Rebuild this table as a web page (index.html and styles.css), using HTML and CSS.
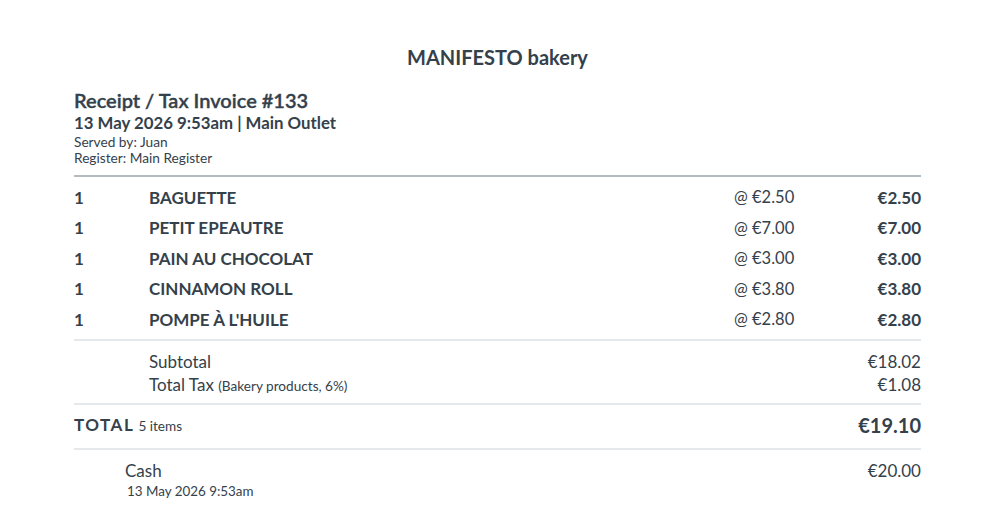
FILE: index.html
```html
<!DOCTYPE html>
<html lang="en">
<head>
    <meta charset="UTF-8">
    <title>Receipt #133</title>
    <link rel="stylesheet" href="styles.css">
</head>
<body>
    <div class="receipt">
        <h1 class="shop-name">MANIFESTO bakery</h1>

        <div class="receipt-head">
            <h2>Receipt / Tax Invoice #133</h2>
            <h3>13 May 2026 9:53am | Main Outlet</h3>
            <p>Served by: Juan</p>
            <p>Register: Main Register</p>
        </div>

        <div class="items">
            <div class="item">
                <span class="qty">1</span>
                <span class="name">BAGUETTE</span>
                <span class="unit">@ €2.50</span>
                <span class="price">€2.50</span>
            </div>
            <div class="item">
                <span class="qty">1</span>
                <span class="name">PETIT EPEAUTRE</span>
                <span class="unit">@ €7.00</span>
                <span class="price">€7.00</span>
            </div>
            <div class="item">
                <span class="qty">1</span>
                <span class="name">PAIN AU CHOCOLAT</span>
                <span class="unit">@ €3.00</span>
                <span class="price">€3.00</span>
            </div>
            <div class="item">
                <span class="qty">1</span>
                <span class="name">CINNAMON ROLL</span>
                <span class="unit">@ €3.80</span>
                <span class="price">€3.80</span>
            </div>
            <div class="item">
                <span class="qty">1</span>
                <span class="name">POMPE À L'HUILE</span>
                <span class="unit">@ €2.80</span>
                <span class="price">€2.80</span>
            </div>
        </div>

        <div class="sums">
            <div class="sum-row">
                <span>Subtotal</span>
                <span>€18.02</span>
            </div>
            <div class="sum-row">
                <span>Total Tax <small>(Bakery products, 6%)</small></span>
                <span>€1.08</span>
            </div>
        </div>

        <div class="total">
            <span><strong>TOTAL</strong> <small>5 items</small></span>
            <span class="total-value">€19.10</span>
        </div>

        <div class="payment">
            <div class="pay-info">
                <span class="pay-type">Cash</span>
                <small>13 May 2026 9:53am</small>
            </div>
            <span>€20.00</span>
        </div>
    </div>
</body>
</html>
```

FILE: styles.css
```css
body {
    margin: 0;
    padding: 0 79px 0 74px;
    background: #ffffff;
    font-family: Lato, "Noto Sans", sans-serif;
    color: #34414b;
}
.receipt {
    width: 847px;
}
.shop-name {
    margin: 0;
    padding-top: 44px;
    font-size: 20px;
    font-weight: bold;
    text-align: center;
    line-height: 26px;
}
.receipt-head {
    margin-top: 18px;
    padding-bottom: 9px;
    border-bottom: 2px solid #b3bcc3;
}
.receipt-head h2 {
    margin: 0;
    font-family: "Lato Semibold", "Lato Medium", Lato, sans-serif;
    font-size: 20px;
    font-weight: 600;
    line-height: 24px;
    /* no semibold face installed, thicken the regular one a little */
    -webkit-text-stroke: 0.35px #34414b;
}
.receipt-head h3 {
    margin: 0;
    font-size: 16.8px;
    font-weight: bold;
    line-height: 22px;
}
.receipt-head p {
    margin: 0;
    font-size: 13.7px;
    line-height: 16px;
}
.items {
    padding: 5px 0 4px;
    border-bottom: 2px solid #e6e9eb;
}
.item {
    display: flex;
    align-items: center;
    height: 30.5px;
    font-size: 17px;
}
.qty {
    width: 75px;
    font-weight: bold;
}
.name {
    flex: 1;
    font-weight: bold;
}
.unit {
    width: 111px;
    font-size: 16.5px;
}
.price {
    width: 76px;
    text-align: right;
    font-weight: bold;
}
.sums {
    padding: 9px 0 5px 75px;
    border-bottom: 2px solid #e6e9eb;
    font-size: 17px;
}
.sum-row {
    display: flex;
    justify-content: space-between;
    line-height: 23px;
}
.sum-row small {
    font-size: 13.6px;
}
.total {
    display: flex;
    justify-content: space-between;
    align-items: center;
    height: 40px;
    padding-bottom: 3px;
    border-bottom: 2px solid #e6e9eb;
}
.total strong {
    font-size: 17px;
    letter-spacing: 1.5px;
}
.total small {
    font-size: 13.6px;
}
.total-value {
    font-size: 20px;
    font-weight: bold;
}
.payment {
    display: flex;
    justify-content: space-between;
    align-items: flex-start;
    padding: 10px 0 0 51px;
    font-size: 17px;
}
.pay-info {
    display: flex;
    flex-direction: column;
}
.pay-type {
    line-height: 22px;
}
.pay-info small {
    font-size: 13.4px;
    line-height: 19px;
    padding-left: 2px;
}
.payment > span {
    line-height: 22px;
}
```
